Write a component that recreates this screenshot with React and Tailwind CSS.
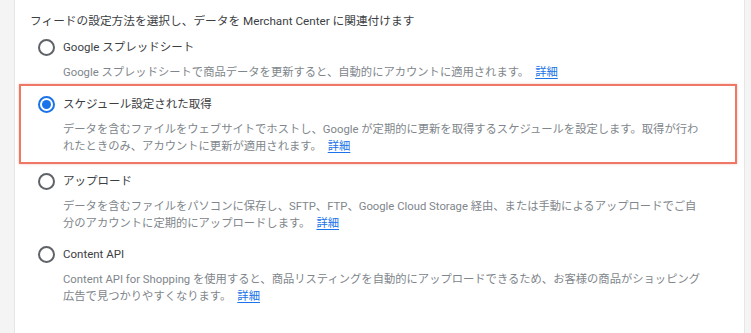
import React from "react";

const FONT = { fontFamily: 'Roboto, "Noto Sans CJK JP", sans-serif' };

function Radio({ checked }) {
  if (checked) {
    return (
      <span className="flex h-[17px] w-[17px] shrink-0 items-center justify-center rounded-full border-2 border-[#1a73e8]">
        <span className="h-[9px] w-[9px] rounded-full bg-[#1a73e8]" />
      </span>
    );
  }
  return <span className="h-[17px] w-[17px] shrink-0 rounded-full border-2 border-[#5f6368]" />;
}

function Link() {
  return <a className="ml-[6px] text-[#1a73e8] underline underline-offset-2">詳細</a>;
}

function Item({ checked, title, lines, boxClass }) {
  return (
    <div className={`ml-[4px] mr-[7px] border-2 pl-[17px] ${boxClass}`}>
      <div className="flex h-[17px] items-center gap-[8px]">
        <Radio checked={checked} />
        <span className="text-[#3c4043]">{title}</span>
      </div>
      <div className="mt-[8px] pl-[25px] text-[11.3px] text-[#80868b]">
        {lines.map((l, i) => (
          <div key={i} className="h-[17px] whitespace-nowrap">
            {l}
          </div>
        ))}
      </div>
    </div>
  );
}

export default function App() {
  return (
    <div className="flex h-[333px] w-[751px] bg-[#f4f4f4] text-[11.5px] leading-[17px]" style={FONT}>
      <div className="w-[14px] shrink-0" />
      <div className="flex-1 border-r border-l border-[#e6e6e6] bg-white">
        <div className="pl-[15px] pt-[13px] text-[11.7px] text-[#3c4043]">
          フィードの設定方法を選択し、データを Merchant Center に関連付けます
        </div>
        <Item
          title="Google スプレッドシート"
          boxClass="border-transparent pt-[7px] pb-[1px]"
          lines={[
            <>
              Google スプレッドシートで商品データを更新すると、自動的にアカウントに適用されます。
              <Link />
            </>,
          ]}
        />
        <Item
          checked
          title="スケジュール設定された取得"
          boxClass="border-[#ee7766] pt-[10px] pb-[7px] shadow-[0_0_2px_rgba(238,119,102,0.5)]"
          lines={[
            "データを含むファイルをウェブサイトでホストし、Google が定期的に更新を取得するスケジュールを設定します。取得が行わ",
            <>
              れたときのみ、アカウントに更新が適用されます。
              <Link />
            </>,
          ]}
        />
        <Item
          title="アップロード"
          boxClass="border-transparent pt-[7px] pb-[5px]"
          lines={[
            "データを含むファイルをパソコンに保存し、SFTP、FTP、Google Cloud Storage 経由、または手動によるアップロードでご自",
            <>
              分のアカウントに定期的にアップロードします。
              <Link />
            </>,
          ]}
        />
        <Item
          title="Content API"
          boxClass="border-transparent pt-[5px] pb-[5px]"
          lines={[
            "Content API for Shopping を使用すると、商品リスティングを自動的にアップロードできるため、お客様の商品がショッピング",
            <>
              広告で見つかりやすくなります。
              <Link />
            </>,
          ]}
        />
      </div>
      <div className="w-[6px] shrink-0" />
    </div>
  );
}
